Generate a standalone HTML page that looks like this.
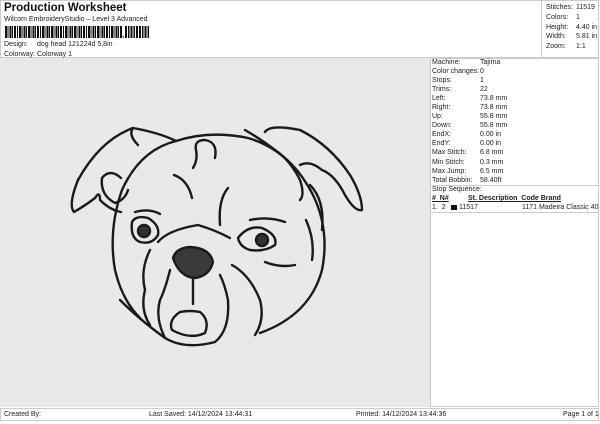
<!DOCTYPE html><html><head><style>
body{margin:0;width:600px;height:424px;background:#fff;font-family:"Liberation Sans",sans-serif;font-size:7px;color:#222;position:relative;overflow:hidden}
.a{position:absolute;white-space:nowrap}
</style></head><body>
<div class="a" style="left:0;top:0;width:599px;height:58px;border:1px solid #ccc;box-sizing:border-box"></div>
<div class="a" style="left:4px;top:2px;font-size:11.5px;font-weight:bold;color:#111">Production Worksheet</div>
<div class="a" style="left:4px;top:16px">Wilcom EmbroideryStudio – Level 3 Advanced</div>
<div class="a" style="left:5px;top:26px;width:117px;height:12px;background:repeating-linear-gradient(90deg,#111 0 2px,#fff 2px 2.6px,#111 2.6px 3.6px,#fff 3.6px 4.6px)"></div>
<div class="a" style="left:122px;font-size:8px;font-weight:bold;top:30px">,</div>
<div class="a" style="left:125px;top:26px;width:24px;height:12px;background:repeating-linear-gradient(90deg,#111 0 1.8px,#fff 1.8px 2.8px)"></div>
<div class="a" style="left:4px;top:41px">Design:</div><div class="a" style="left:37px;top:41px">dog head 121224d 5,8in</div>
<div class="a" style="left:4px;top:51px">Colorway:</div><div class="a" style="left:37px;top:51px">Colorway 1</div>
<div class="a" style="left:541px;top:0;width:59px;height:58px;border-left:1px solid #ccc"></div>
<div class="a" style="left:546px;top:3px;line-height:9.8px">Stitches:<br>Colors:<br>Height:<br>Width:<br>Zoom:</div>
<div class="a" style="left:576px;top:3px;line-height:9.8px">11519<br>1<br>4.40 in<br>5.81 in<br>1:1</div>
<div class="a" style="left:0;top:58px;width:430px;height:349px;background:#e9e9e9"></div>
<div class="a" style="left:430px;top:58px;width:169px;height:349px;border:1px solid #ccc;box-sizing:border-box"></div>
<div class="a" style="left:432px;top:58px;line-height:9.05px">Machine:<br>Color changes:<br>Stops:<br>Trims:<br>Left:<br>Right:<br>Up:<br>Down:<br>EndX:<br>EndY:<br>Max Stitch:<br>Min Stitch:<br>Max Jump:<br>Total Bobbin:<br>Stop Sequence:</div>
<div class="a" style="left:480px;top:58px;line-height:9.05px">Tajima<br>0<br>1<br>22<br>73.8 mm<br>73.8 mm<br>55.8 mm<br>55.8 mm<br>0.00 in<br>0.00 in<br>6.8 mm<br>0.3 mm<br>6.5 mm<br>58.40ft</div>
<div class="a" style="left:430px;top:185px;width:169px;border-top:1px solid #ccc"></div>
<div class="a" style="left:432px;top:195px;font-weight:bold;text-decoration:underline">#&nbsp;&nbsp;N#</div>
<div class="a" style="left:468px;top:195px;font-weight:bold;text-decoration:underline">St.&nbsp;Description&nbsp;&nbsp;Code&nbsp;Brand</div>
<div class="a" style="left:432px;top:204px">1.&nbsp;&nbsp;2</div>
<div class="a" style="left:451px;top:205px;width:6px;height:5px;background:#111"></div>
<div class="a" style="left:459px;top:204px">11517</div>
<div class="a" style="left:522px;top:204px">1171&nbsp;Madeira Classic 40</div>
<div class="a" style="left:430px;top:212px;width:169px;border-top:1px solid #ccc"></div>
<div class="a" style="left:0;top:408px;width:599px;height:13px;border:1px solid #ccc;box-sizing:border-box"></div>
<div class="a" style="left:4px;top:411px">Created By:</div>
<div class="a" style="left:149px;top:411px">Last Saved: 14/12/2024 13:44:31</div>
<div class="a" style="left:356px;top:411px">Printed: 14/12/2024 13:44:36</div>
<div class="a" style="left:563px;top:411px">Page 1 of 1</div>
<svg class="a" style="left:0;top:58px" width="430" height="349" viewBox="0 58 430 349" fill="none" stroke="#1a1a1a" stroke-width="2.4" stroke-linecap="round" stroke-linejoin="round">
<path d="M176 141 Q210 130 248 138 Q290 150 313 195 Q330 230 322 270 Q310 315 260 333"/>
<path d="M176 141 Q140 150 122 190 Q108 230 115 270 Q122 300 140 318"/>
<path d="M138 145 Q128 135 133 128 Q160 133 176 141"/>
<path d="M133 128 Q100 140 78 180 Q68 205 74 212 Q86 205 95 198 Q100 190 100 200 Q110 210 121 212"/>
<path d="M121 178 Q110 168 102 178 Q100 195 115 203 Q125 200 128 190"/>
<path d="M265 132 Q270 124 300 130 Q330 145 350 175 Q362 195 362 210 Q355 212 345 195 Q335 175 322 170 Q310 160 300 165"/>
<path d="M245 130 Q262 140 275 150 Q290 160 300 180 Q305 195 300 200"/>
<path d="M310 185 Q325 200 322 230"/>
<path d="M306 220 Q315 240 312 260"/>
<path d="M196 150 Q194 140 205 140 Q218 142 215 158"/>
<path d="M196 150 Q198 160 193 168"/>
<path d="M174 175 Q188 180 192 198"/>
<path d="M228 188 Q218 200 220 225"/>
<path d="M132 222 Q136 215 148 218 Q160 225 158 235 Q152 245 140 242 Q130 238 132 222Z"/>
<circle cx="144" cy="231" r="6" fill="#333"/>
<path d="M238 238 Q248 225 262 228 Q278 235 275 245 Q265 252 250 250 Q240 247 238 238Z"/>
<circle cx="262" cy="240" r="6" fill="#333"/>
<path d="M135 212 Q150 208 160 214"/>
<path d="M250 220 Q268 216 285 222"/>
<path d="M158 242 Q168 230 198 225 Q215 230 230 238"/>
<path d="M173 258 Q176 248 190 247 Q210 248 213 262 Q210 275 196 278 Q180 278 173 258Z" fill="#3a3a3a"/>
<path d="M193 278 L193 304"/>
<path d="M170 270 Q165 290 160 300 Q155 318 165 338 Q185 350 215 342 Q230 330 228 300 Q225 285 220 275"/>
<path d="M180 312 Q168 320 172 330 Q190 340 205 333 Q210 320 200 312 Q190 310 180 312Z"/>
<path d="M150 250 Q140 270 145 290 Q140 310 150 325"/>
<path d="M232 265 Q250 275 260 300 Q265 320 255 335"/>
<path d="M265 262 Q280 268 295 265"/>
<path d="M120 300 Q140 320 165 338"/>
</svg>
</body></html>
